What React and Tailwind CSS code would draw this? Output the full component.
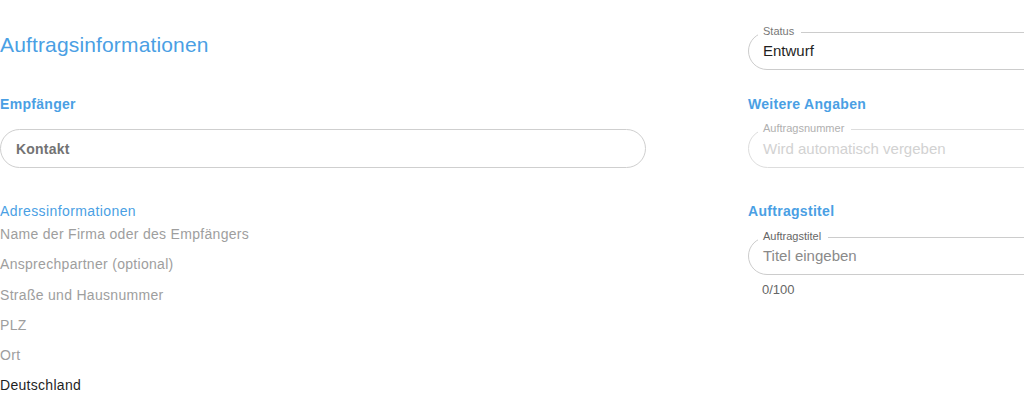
import React from "react";

function OutlinedField({ label, value, labelColor, valueColor, borderColor, className = "" }) {
  return (
    <div className={`relative h-[38px] rounded-full border ${borderColor} flex items-center pl-[14px] ${className}`}>
      <span className={`absolute -top-[8px] left-[9px] bg-white pl-[5px] pr-[7px] text-[11px] leading-[12px] ${labelColor}`}>
        {label}
      </span>
      <span className={`text-[15px] leading-[20px] ${valueColor}`}>{value}</span>
    </div>
  );
}

export default function App() {
  const addressLines = [
    "Name der Firma oder des Empfängers",
    "Ansprechpartner (optional)",
    "Straße und Hausnummer",
    "PLZ",
    "Ort",
  ];
  return (
    <div
      className="w-[1024px] h-[403px] overflow-hidden bg-white flex"
      style={{ fontFamily: '"Liberation Sans", Arial, sans-serif' }}
    >
      {/* Left column */}
      <div className="w-[646px] shrink-0 flex flex-col">
        <h1 className="mt-[31px] text-[21px] leading-[28px] tracking-[0.15px] text-[#4a9fe4] font-normal">
          Auftragsinformationen
        </h1>
        <h2 className="mt-[35px] text-[14px] leading-[20px] font-bold tracking-[0.3px] text-[#4a9fe4]">
          Empfänger
        </h2>
        <div className="mt-[15px] h-[39px] rounded-full border border-[#cfcfcf] flex items-center pl-[15px] pt-[1px]">
          <span className="text-[14px] leading-[20px] font-bold tracking-[0.2px] text-[#737373]">Kontakt</span>
        </div>
        <div className="mt-[33px] text-[14px] leading-[20px] tracking-[0.4px] text-[#4a9fe4]">
          Adressinformationen
        </div>
        <div className="-mt-[2px] flex flex-col">
          {addressLines.map((l) => (
            <div key={l} className="text-[14px] leading-[30.3px] tracking-[0.3px] text-[#9e9e9e]">
              {l}
            </div>
          ))}
          <div className="text-[14px] leading-[30.3px] tracking-[0.3px] text-[#1f1f1f]">Deutschland</div>
        </div>
      </div>

      {/* Right column */}
      <div className="ml-[102px] w-[320px] shrink-0 flex flex-col">
        <OutlinedField
          className="mt-[32px]"
          label="Status"
          value="Entwurf"
          labelColor="text-[#777777]"
          valueColor="text-[#1f1f1f]"
          borderColor="border-[#cccccc]"
        />
        <h2 className="mt-[24px] text-[14px] leading-[20px] font-bold tracking-[0.3px] text-[#4a9fe4]">
          Weitere Angaben
        </h2>
        <OutlinedField
          className="mt-[15px] h-[39px]"
          label="Auftragsnummer"
          value="Wird automatisch vergeben"
          labelColor="text-[#b0b0b0]"
          valueColor="text-[#d2d2d2]"
          borderColor="border-[#dddddd]"
        />
        <h2 className="mt-[33px] text-[14px] leading-[20px] font-bold tracking-[0.3px] text-[#4a9fe4]">
          Auftragstitel
        </h2>
        <OutlinedField
          className="mt-[16px]"
          label="Auftragstitel"
          value="Titel eingeben"
          labelColor="text-[#666666]"
          valueColor="text-[#8a8a8a]"
          borderColor="border-[#cccccc]"
        />
        <div className="mt-[6.5px] pl-[14px] text-[13px] leading-[16px] text-[#666666]">0/100</div>
      </div>
    </div>
  );
}
